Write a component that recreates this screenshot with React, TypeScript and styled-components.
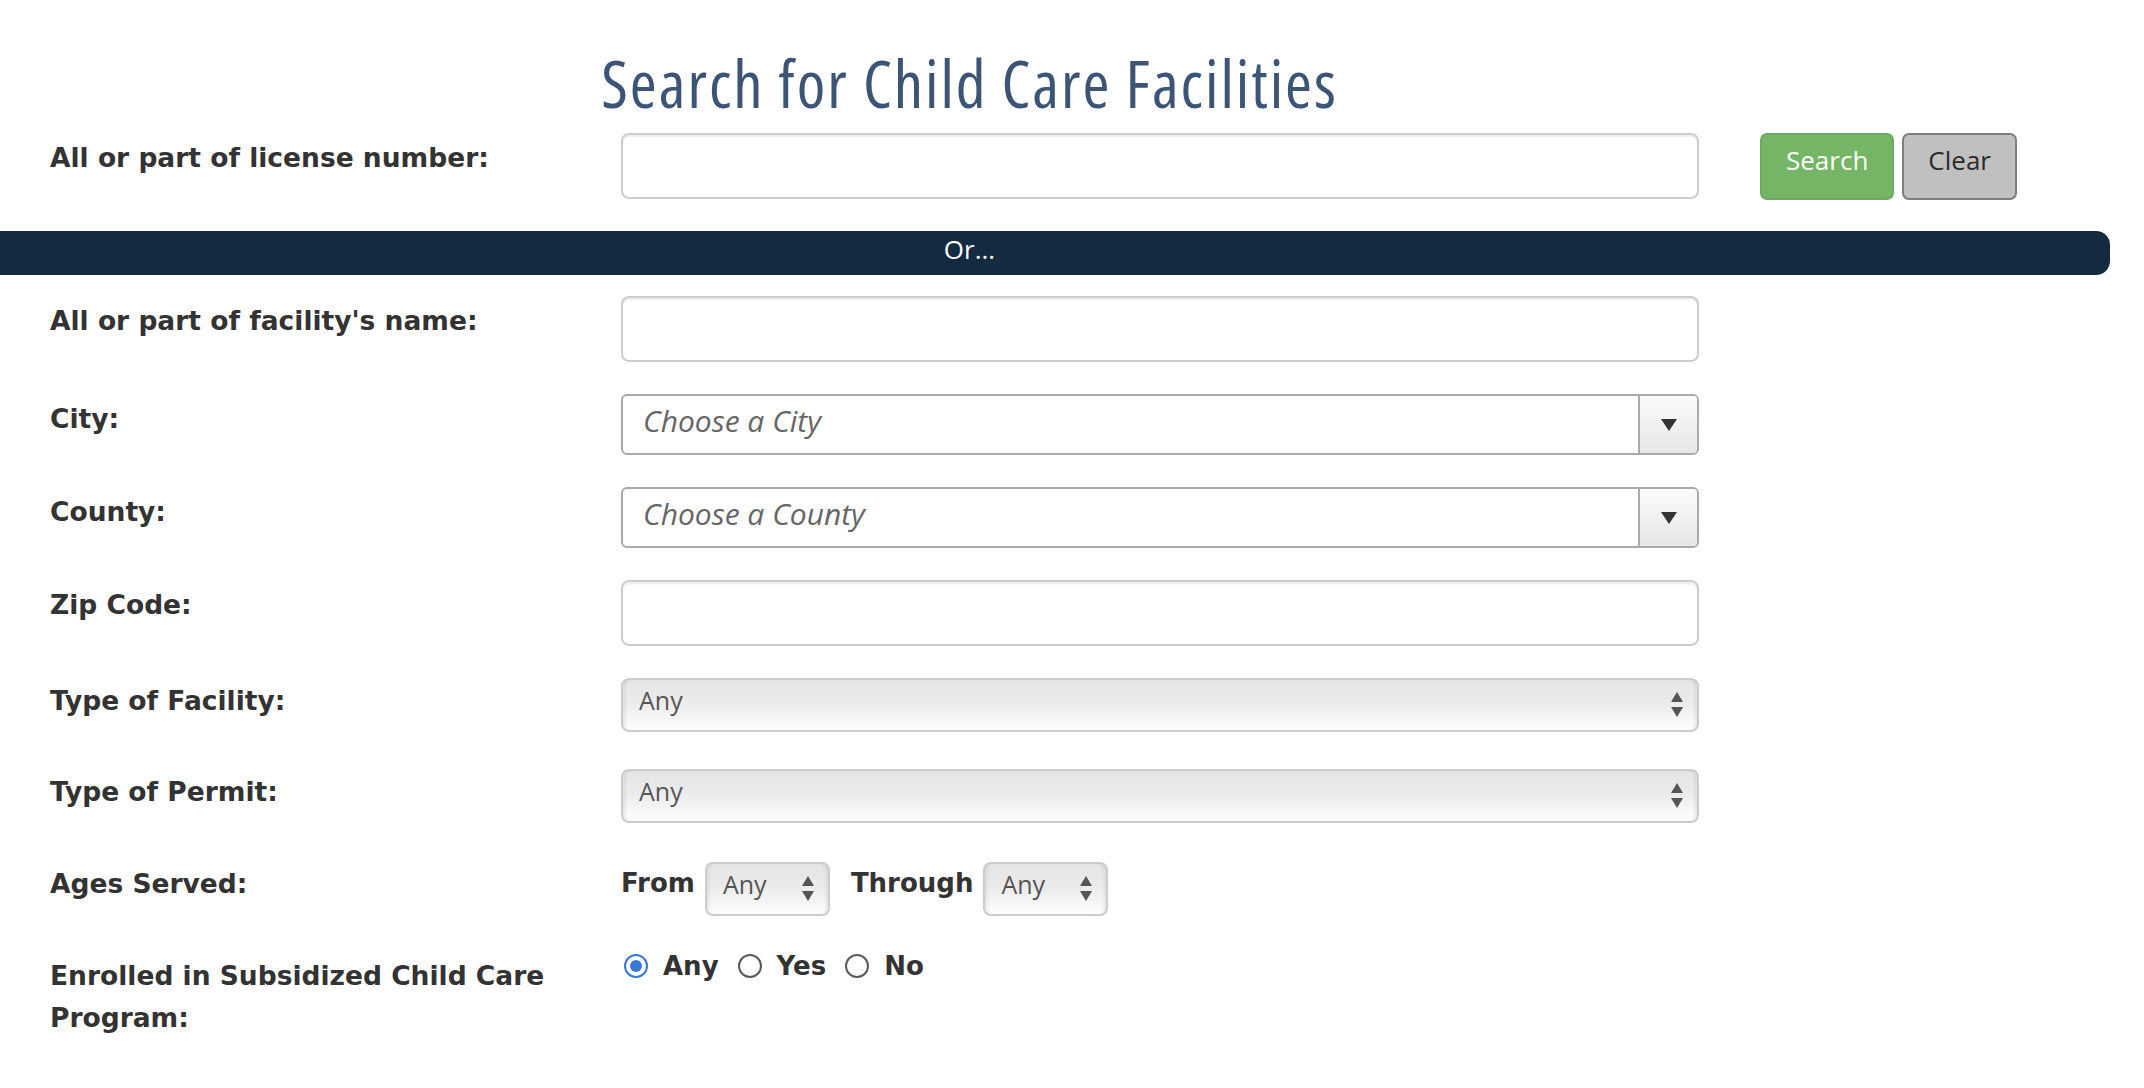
import React from "react";
import styled, { createGlobalStyle } from "styled-components";

const GlobalStyle = createGlobalStyle`
  html, body { margin: 0; padding: 0; background: #ffffff; }
  body { width: 2144px; min-height: 1088px; overflow: hidden; }
  * { box-sizing: border-box; }
`;

const Page = styled.div`
  width: 2144px;
  padding-top: 46px;
  font-family: "DejaVu Sans", Verdana, sans-serif;
  color: #333333;
`;

const Title = styled.h1`
  width: 1939px;
  margin: 0;
  text-align: center;
  font-family: "Open Sans", "Noto Sans", sans-serif;
  font-stretch: 75%;
  font-weight: 400;
  font-size: 65px;
  letter-spacing: 2px;
  line-height: 74px;
  color: #3c5577;
`;

const Section = styled.div`
  padding-left: 50px;
  display: flex;
  flex-direction: column;
`;

const Row = styled.div<{ $mt?: number }>`
  display: flex;
  align-items: flex-start;
  margin-top: ${(p) => p.$mt ?? 0}px;
`;

const Label = styled.div<{ $pt?: number }>`
  width: 571px;
  flex: none;
  padding: ${(p) => p.$pt ?? 4}px 20px 0 0;
  font-weight: 700;
  font-size: 26.5px;
  line-height: 42px;
  color: #333333;
`;

const TextInput = styled.input`
  width: 1078px;
  height: 66px;
  border: 2px solid #cccccc;
  border-radius: 8px;
  background: #ffffff;
  box-shadow: inset 0 2px 2px rgba(0, 0, 0, 0.075);
  padding: 0 20px;
  font-family: "Open Sans", sans-serif;
  font-size: 26px;
  outline: none;
`;

const ButtonGroup = styled.div`
  display: flex;
  gap: 8px;
  margin-left: 61px;
`;

const Button = styled.button<{ $variant: "primary" | "plain" }>`
  height: 67px;
  padding: 0 24px 12px;
  border-radius: 7px;
  border: 2px solid ${(p) => (p.$variant === "primary" ? "#6cab5f" : "#7d7d7d")};
  background: ${(p) => (p.$variant === "primary" ? "#74b566" : "#c0c0c0")};
  color: ${(p) => (p.$variant === "primary" ? "#ffffff" : "#2b2b2b")};
  font-family: "Open Sans", sans-serif;
  font-size: 26px;
  line-height: 51px;
  cursor: pointer;
`;

const OrBar = styled.div`
  width: 2110px;
  height: 44px;
  margin-top: 31px;
  background: #142a40;
  border-radius: 0 14px 14px 0;
`;

const OrText = styled.div`
  width: 1939px;
  text-align: center;
  color: #ffffff;
  font-family: "Open Sans", sans-serif;
  font-size: 26px;
  line-height: 36px;
`;

const ChosenSelect = styled.div`
  width: 1078px;
  height: 61px;
  display: flex;
  border: 2px solid #aaaaaa;
  border-radius: 6px;
  background: #ffffff;
  overflow: hidden;
`;

const ChosenText = styled.span`
  flex: 1;
  padding-left: 20px;
  font-family: "Open Sans", sans-serif;
  font-style: italic;
  font-size: 30px;
  line-height: 50px;
  color: #666666;
`;

const ChosenArrow = styled.div`
  width: 59px;
  flex: none;
  border-left: 2px solid #aaaaaa;
  background: linear-gradient(to bottom, #fbfbfb 0%, #f1f1f1 50%, #e6e6e6 100%);
  display: flex;
  align-items: center;
  justify-content: center;
`;

const FancySelect = styled.div<{ $w: number }>`
  width: ${(p) => p.$w}px;
  height: 54px;
  flex: none;
  display: flex;
  align-items: center;
  justify-content: space-between;
  padding: 0 14px 0 16px;
  border: 2px solid #cccccc;
  border-radius: 8px;
  background: linear-gradient(to bottom, #e5e5e5 0%, #ebebeb 45%, #fefefe 100%);
  box-shadow: inset 4px 0 4px -3px rgba(0, 0, 0, 0.12), inset -4px 0 4px -3px rgba(0, 0, 0, 0.12),
    inset 0 -2px 2px rgba(255, 255, 255, 0.9);
  font-family: "Open Sans", sans-serif;
  font-size: 25px;
  color: #555555;
`;

const SelectValue = styled.span`
  margin-bottom: 10px;
`;

const Inline = styled.div`
  display: flex;
  align-items: flex-start;
`;

const InlineText = styled.span<{ $ml?: number }>`
  font-weight: 700;
  font-size: 26px;
  line-height: 42px;
  margin-left: ${(p) => p.$ml ?? 0}px;
  margin-right: 10px;
`;

const RadioGroup = styled.div`
  display: flex;
  align-items: center;
  height: 42px;
  padding-left: 3px;
`;

const RadioItem = styled.label`
  display: flex;
  align-items: center;
  gap: 15px;
  margin-right: 19px;
  font-weight: 700;
  font-size: 26px;
  line-height: 42px;
`;

const RadioCircle = styled.span<{ $checked?: boolean }>`
  width: 24px;
  height: 24px;
  border-radius: 50%;
  flex: none;
  border: 2px solid ${(p) => (p.$checked ? "#3a78d3" : "#5a5a5a")};
  background: #ffffff;
  display: flex;
  align-items: center;
  justify-content: center;
  &::after {
    content: "";
    width: 12px;
    height: 12px;
    border-radius: 50%;
    background: ${(p) => (p.$checked ? "#3a78d3" : "transparent")};
  }
`;

const DownTriangle = () => (
  <svg width="16" height="12" viewBox="0 0 16 12">
    <polygon points="0,0 16,0 8,12" fill="#333" />
  </svg>
);

const UpDown = () => (
  <svg width="12" height="26" viewBox="0 0 12 26">
    <polygon points="6,0 12,10 0,10" fill="#555" />
    <polygon points="0,15 12,15 6,25" fill="#555" />
  </svg>
);

const Fancy = ({ w }: { w: number }) => (
  <FancySelect $w={w}>
    <SelectValue>Any</SelectValue>
    <UpDown />
  </FancySelect>
);

export default function App() {
  return (
    <Page>
      <GlobalStyle />
      <Title>Search for Child Care Facilities</Title>
      <Section>
        <Row $mt={13}>
          <Label>All or part of license number:</Label>
          <TextInput />
          <ButtonGroup>
            <Button $variant="primary">Search</Button>
            <Button $variant="plain">Clear</Button>
          </ButtonGroup>
        </Row>
      </Section>
      <OrBar>
        <OrText>Or...</OrText>
      </OrBar>
      <Section>
        <Row $mt={21}>
          <Label>All or part of facility's name:</Label>
          <TextInput />
        </Row>
        <Row $mt={32}>
          <Label>City:</Label>
          <ChosenSelect>
            <ChosenText>Choose a City</ChosenText>
            <ChosenArrow>
              <DownTriangle />
            </ChosenArrow>
          </ChosenSelect>
        </Row>
        <Row $mt={32}>
          <Label>County:</Label>
          <ChosenSelect>
            <ChosenText>Choose a County</ChosenText>
            <ChosenArrow>
              <DownTriangle />
            </ChosenArrow>
          </ChosenSelect>
        </Row>
        <Row $mt={32}>
          <Label>Zip Code:</Label>
          <TextInput />
        </Row>
        <Row $mt={32}>
          <Label $pt={2}>Type of Facility:</Label>
          <Fancy w={1078} />
        </Row>
        <Row $mt={37}>
          <Label $pt={2}>Type of Permit:</Label>
          <Fancy w={1078} />
        </Row>
        <Row $mt={39}>
          <Label $pt={1}>Ages Served:</Label>
          <Inline>
            <InlineText>From</InlineText>
            <Fancy w={125} />
            <InlineText $ml={21}>Through</InlineText>
            <Fancy w={125} />
          </Inline>
        </Row>
        <Row $mt={29}>
          <Label $pt={10}>Enrolled in Subsidized Child Care Program:</Label>
          <RadioGroup>
            <RadioItem>
              <RadioCircle $checked />
              Any
            </RadioItem>
            <RadioItem>
              <RadioCircle />
              Yes
            </RadioItem>
            <RadioItem>
              <RadioCircle />
              No
            </RadioItem>
          </RadioGroup>
        </Row>
      </Section>
    </Page>
  );
}
